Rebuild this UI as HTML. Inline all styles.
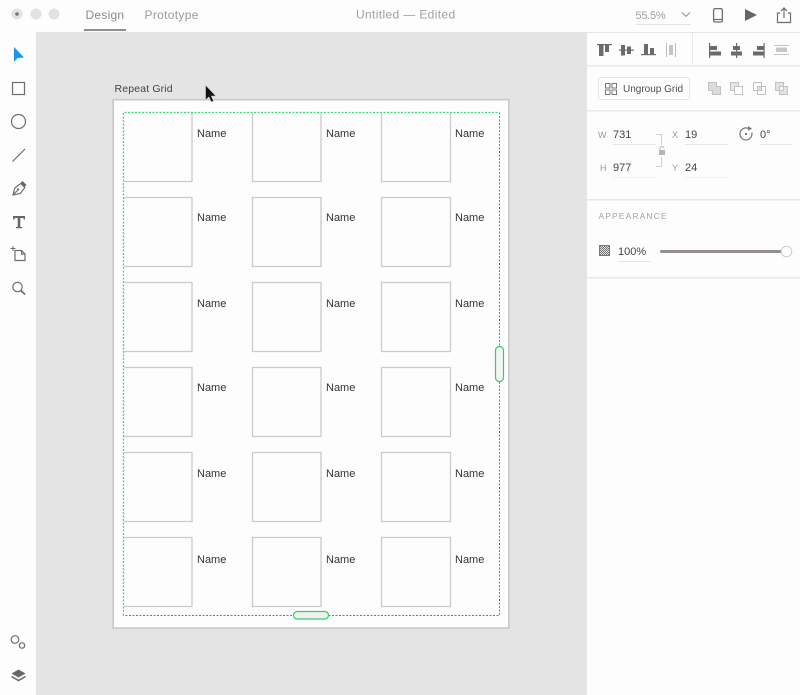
<!DOCTYPE html>
<html><head><meta charset="utf-8"><style>
html,body{margin:0;padding:0;width:800px;height:695px;overflow:hidden;background:#e4e4e4}
svg{display:block}
text{font-family:"Liberation Sans",sans-serif}
.n{font-size:11px;fill:#333}
.g{fill:none;stroke:#cbcbcb;stroke-width:1.3}
.ic{fill:none;stroke:#6e6e6e;stroke-width:1.2}
.al{fill:#6b6b6b}
.lb{font-size:9px;fill:#999}
.v{font-size:11px;fill:#444}
.u{stroke:#e6e6e6;stroke-width:1}
</style></head><body>
<svg width="800" height="695" viewBox="0 0 800 695" xmlns="http://www.w3.org/2000/svg">
<defs><pattern id="ck" width="2" height="2" patternUnits="userSpaceOnUse"><rect width="2" height="2" fill="#dcdcdc"/><rect width="1" height="1" fill="#777"/><rect x="1" y="1" width="1" height="1" fill="#777"/></pattern></defs>
<rect width="800" height="695" fill="#e4e4e4"/>
<!-- top bar -->
<rect width="800" height="32" fill="#fdfdfd"/>
<circle cx="17" cy="14" r="5.5" fill="#e2e2e2"/><circle cx="17" cy="14" r="1.8" fill="#777"/>
<circle cx="36" cy="14" r="5.5" fill="#e2e2e2"/><circle cx="54" cy="14" r="5.5" fill="#e2e2e2"/>
<text x="85.500" y="19" font-size="12" fill="#8a8a8a" letter-spacing=".25">Design</text>
<text x="144.500" y="19" font-size="12" fill="#999" letter-spacing=".32">Prototype</text>
<rect x="84" y="29" width="42" height="2" fill="#8e8e8e"/>
<text x="356" y="18.500" font-size="12" fill="#a0a0a0" letter-spacing=".36">Untitled — Edited</text>
<text x="635.500" y="19" font-size="11" fill="#a0a0a0" letter-spacing="-.25">55.5%</text>
<path d="M682 12.500l4 3.800 4-3.800" fill="none" stroke="#999" stroke-width="1.200"/>
<rect x="636" y="24" width="55" height="1" fill="#e3e3e3"/>
<rect x="713.600" y="8.600" width="8.800" height="13.400" rx="1.500" fill="none" stroke="#6e6e6e" stroke-width="1.300"/>
<path d="M714 19.500h8" class="ic"/>
<path d="M745 9v12l12-6z" fill="#666"/>
<path d="M780 13h-2.500v9.500h13V13H788M784 18V8M781 11l3-3 3 3" class="ic"/>

<!-- left bar -->
<rect x="0" y="32" width="36" height="663" fill="#fdfdfd"/>
<path d="M14 47v15l3.500-4 6.500-.5z" fill="#1b95e8"/>
<rect x="12.500" y="82.500" width="12" height="12" class="ic"/>
<circle cx="18.500" cy="121.500" r="7" class="ic"/>
<path d="M12.500 161.500l12.500-12.500" class="ic"/>
<path d="M13 195l1.800-7 6-4.500 4 4-4.500 6zM13 195l4.500-4.500" class="ic"/>
<path d="M20.500 183l2-2 4 4-2 2z" fill="#666"/>
<circle cx="18" cy="189.500" r="1.200" fill="#6e6e6e"/>
<path d="M13 216h12v3.500h-1l-.8-1.500H20.300v9h1.700v1.200h-6V227h1.700v-9h-2.900l-.8 1.500h-1z" fill="#666"/>
<path d="M15 250.500h6.500l3.500 3.500v6.500H15zM21.500 250.500V254H25" class="ic"/>
<path d="M10.500 248.500h5M13 246v5" stroke="#6e6e6e" stroke-width="1" fill="none"/>
<circle cx="17.500" cy="287" r="4.700" class="ic" stroke-width="1.400"/>
<path d="M21 290.500l4 4" stroke="#6e6e6e" stroke-width="1.800"/>
<circle cx="15" cy="639.500" r="3.800" class="ic"/><circle cx="22" cy="645.500" r="2.700" class="ic"/>
<path d="M18.500 669.500l7 4-7 4-7-4z" fill="#666"/>
<path d="M11.500 676.500l7 4 7-4" fill="none" stroke="#666" stroke-width="1.500"/>

<!-- right panel -->
<rect x="587" y="33" width="213" height="662" fill="#fdfdfd"/>
<rect x="587" y="65" width="213" height="1.500" fill="#e9e9e9"/>
<rect x="692" y="33" width="1" height="32" fill="#e9e9e9"/>
<rect x="587" y="110" width="213" height="1.500" fill="#ececec"/>
<rect x="587" y="199" width="213" height="1.500" fill="#e8e8e8"/>
<rect x="587" y="277" width="213" height="1.500" fill="#e8e8e8"/>

<!-- align icons -->
<rect x="597" y="44" width="15" height="1.200" class="al"/><rect x="599" y="45" width="4.500" height="11" class="al"/><rect x="605" y="45" width="4" height="7" class="al"/>
<rect x="619" y="49.500" width="15" height="1.200" class="al"/><rect x="621" y="45" width="4" height="10.500" class="al"/><rect x="627" y="46.500" width="4" height="7.500" class="al"/>
<rect x="641" y="54" width="15" height="1.200" class="al"/><rect x="644" y="44" width="4" height="10" class="al"/><rect x="650" y="48" width="4" height="6" class="al"/>
<rect x="666" y="43" width="1" height="14" fill="#bbb"/><rect x="675" y="43" width="1" height="14" fill="#bbb"/><rect x="669" y="45" width="4" height="10" fill="#c4c4c4"/>
<rect x="709" y="43" width="1.200" height="15" class="al"/><rect x="710" y="46" width="7" height="4" class="al"/><rect x="710" y="51.500" width="11" height="4" class="al"/>
<rect x="736" y="43" width="1.200" height="15" class="al"/><rect x="733" y="46" width="7" height="4" class="al"/><rect x="731" y="51.500" width="11" height="4" class="al"/>
<rect x="763.500" y="43" width="1.200" height="15" class="al"/><rect x="757" y="46" width="7" height="4" class="al"/><rect x="753" y="51.500" width="11" height="4" class="al"/>
<rect x="774" y="45" width="15" height="1" fill="#c4c4c4"/><rect x="774" y="54" width="15" height="1" fill="#c4c4c4"/><rect x="776" y="47.500" width="11" height="4.500" fill="#c8c8c8"/>

<!-- ungroup -->
<rect x="598.500" y="77.500" width="91" height="22" rx="2.500" fill="#fdfdfd" stroke="#e4e4e4"/>
<g fill="none" stroke="#777" stroke-width="1"><rect x="605.500" y="83.500" width="4.500" height="4.500"/><rect x="612" y="83.500" width="4.500" height="4.500"/><rect x="605.500" y="90" width="4.500" height="4.500"/><rect x="612" y="90" width="4.500" height="4.500"/></g>
<text x="623" y="92" font-size="10" fill="#4a4f58">Ungroup Grid</text>
<!-- boolean icons -->
<g fill="none" stroke="#c2c2c2" stroke-width="1">
<path d="M708.500 82.500h8v4h4v8h-8v-4h-4z" fill="#dcdcdc"/>
<rect x="730.500" y="82.500" width="8" height="8" fill="#e6e6e6"/><rect x="734.500" y="86.500" width="8" height="8" fill="#fdfdfd"/>
<rect x="753.500" y="82.500" width="8" height="8"/><rect x="757.500" y="86.500" width="8" height="8"/><rect x="757.500" y="86.500" width="4" height="4" fill="#ddd"/>
<rect x="775.500" y="82.500" width="8" height="8" fill="#e2e2e2"/><rect x="779.500" y="86.500" width="8" height="8" fill="#e2e2e2"/><rect x="779.500" y="86.500" width="4" height="4" fill="#fdfdfd"/>
</g>

<!-- transform -->
<text x="598" y="138" class="lb">W</text><text x="613" y="138" class="v">731</text>
<line x1="613" y1="144.500" x2="656" y2="144.500" class="u"/>
<text x="672" y="138" class="lb">X</text><text x="685" y="138" class="v">19</text>
<line x1="685" y1="144.500" x2="728" y2="144.500" class="u"/>
<path d="M751.800 132.500A6 6 0 1 1 748.500 128.500" fill="none" stroke="#777" stroke-width="1.200"/>
<path d="M748 126l4 2.800-3.800 2z" fill="#777"/><rect x="745" y="133" width="2" height="2" fill="#777"/>
<text x="760" y="138" class="v">0°</text>
<line x1="760" y1="144.500" x2="792" y2="144.500" class="u"/>
<text x="600" y="171" class="lb">H</text><text x="613" y="171" class="v">977</text>
<line x1="613" y1="177.500" x2="656" y2="177.500" stroke="#f0f0f0"/>
<text x="672" y="171" class="lb">Y</text><text x="685" y="171" class="v">24</text>
<line x1="685" y1="177.500" x2="727" y2="177.500" stroke="#f0f0f0"/>
<path d="M656 134.500h5.500v10M656 166.500h5.500v-10" fill="none" stroke="#cfcfcf" stroke-width="1"/>
<rect x="659" y="150" width="6" height="5" fill="#b5b5b5"/>
<path d="M660 150v-1.500a2 2 0 0 1 4 0" fill="none" stroke="#b5b5b5"/>

<!-- appearance -->
<text x="598.500" y="219" font-size="8.500" fill="#a3a3a3" letter-spacing="1.100">APPEARANCE</text>
<rect x="599.500" y="245.500" width="10" height="10" fill="url(#ck)" stroke="#777"/>
<text x="618" y="255" class="v">100%</text>
<line x1="618" y1="261.500" x2="651" y2="261.500" class="u"/>
<rect x="660" y="250" width="124" height="3" rx="1.500" fill="#948e8e"/>
<circle cx="786.500" cy="251.500" r="5.300" fill="#fdfdfd" stroke="#ccc"/>

<!-- artboard -->
<text x="114.500" y="92" font-size="10.500" fill="#444" letter-spacing=".15">Repeat Grid</text>
<rect x="113.200" y="99.700" width="395.600" height="528.300" fill="#fdfdfd" stroke="#c6c6c6" stroke-width="1.500"/>

<!-- grid cells -->
<g class="g">
<rect x="123.500" y="112.500" width="68.500" height="69"/><rect x="252.500" y="112.500" width="68.500" height="69"/><rect x="381.500" y="112.500" width="69" height="69"/>
<rect x="123.500" y="197.500" width="68.500" height="69"/><rect x="252.500" y="197.500" width="68.500" height="69"/><rect x="381.500" y="197.500" width="69" height="69"/>
<rect x="123.500" y="282.500" width="68.500" height="69"/><rect x="252.500" y="282.500" width="68.500" height="69"/><rect x="381.500" y="282.500" width="69" height="69"/>
<rect x="123.500" y="367.500" width="68.500" height="69"/><rect x="252.500" y="367.500" width="68.500" height="69"/><rect x="381.500" y="367.500" width="69" height="69"/>
<rect x="123.500" y="452.500" width="68.500" height="69"/><rect x="252.500" y="452.500" width="68.500" height="69"/><rect x="381.500" y="452.500" width="69" height="69"/>
<rect x="123.500" y="537.500" width="68.500" height="69"/><rect x="252.500" y="537.500" width="68.500" height="69"/><rect x="381.500" y="537.500" width="69" height="69"/>
</g>
<g class="n">
<text x="197" y="137">Name</text><text x="326" y="137">Name</text><text x="455" y="137">Name</text>
<text x="197" y="221">Name</text><text x="326" y="221">Name</text><text x="455" y="221">Name</text>
<text x="197" y="307">Name</text><text x="326" y="307">Name</text><text x="455" y="307">Name</text>
<text x="197" y="391">Name</text><text x="326" y="391">Name</text><text x="455" y="391">Name</text>
<text x="197" y="477">Name</text><text x="326" y="477">Name</text><text x="455" y="477">Name</text>
<text x="197" y="563">Name</text><text x="326" y="563">Name</text><text x="455" y="563">Name</text>
</g>

<!-- selection -->
<path d="M123.500 615.500V112.500H499.500" fill="none" stroke="#fdfdfd" stroke-width="1.400"/>
<path d="M123.500 615.500V112.500H499.500" fill="none" stroke="#3fd877" stroke-width="1.200" stroke-dasharray="2 1.500"/>
<path d="M499.500 112.500V615.500H123.500" fill="none" stroke="#14b84c" stroke-width="1" stroke-dasharray="2 1.500"/>
<rect x="293.500" y="611.500" width="35" height="7.500" rx="3.700" fill="#f0f0f0" stroke="#2fd06c" stroke-width="1.200"/>
<rect x="495.500" y="346.500" width="8" height="35" rx="3.800" fill="#f4f4f4" stroke="#2fd06c" stroke-width="1.200"/>

<!-- cursor -->
<path d="M205.500 85v15l3.400-3 2.300 5 2.400-1.100-2.300-4.800h4.700z" fill="#111" stroke="#d8d8d8" stroke-width=".6"/>
</svg>
</body></html>
